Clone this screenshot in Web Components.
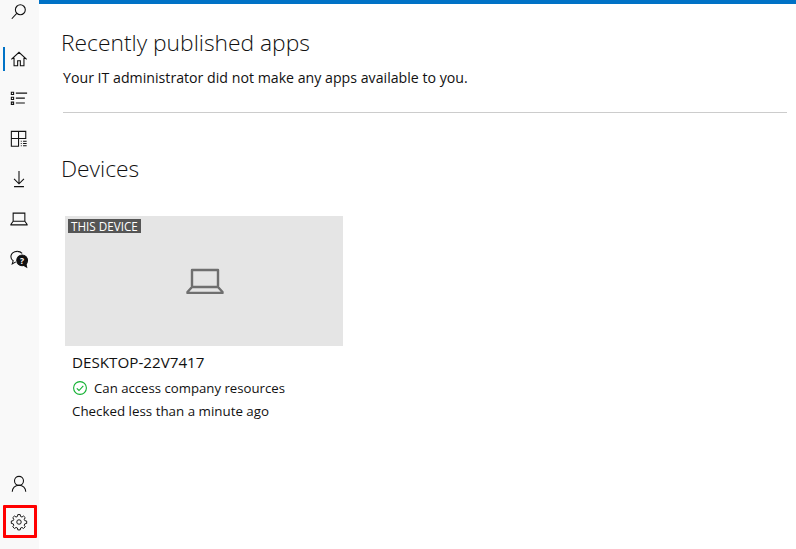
<!DOCTYPE html>
<html>
<head>
<meta charset="utf-8">
<style>
html,body{margin:0;height:100%;overflow:hidden;background:#fff}
body{font-family:"Open Sans","Noto Sans",sans-serif;color:#111}
</style>
</head>
<body>
<cp-shell>
  <cp-sidebar slot="side"></cp-sidebar>
  <cp-section title="Recently published apps" divider>Your IT administrator did not make any apps available to you.</cp-section>
  <cp-section title="Devices" class="devices">
    <cp-device name="DESKTOP-22V7417" status="Can access company resources" checked="Checked less than a minute ago"></cp-device>
  </cp-section>
</cp-shell>
<script>
class CpShell extends HTMLElement {
  constructor() {
    super();
    this.attachShadow({ mode: 'open' });
    this.shadowRoot.innerHTML = `
    <style>
    :host {display:flex;width:796px;height:549px;overflow:hidden}
    #main {flex:1;display:flex;flex-direction:column;border-top:4px solid #0072c6;padding:0 9px 0 22px;min-width:0}
    </style>
    <slot name="side"></slot>
    <div id="main"><slot></slot></div>
    `
  }
}
window.customElements.define('cp-shell', CpShell)

const icons = {
  search: '<circle cx="11.5" cy="7.5" r="5.500"/><path d="M7.500 11.500L2 17.500"/>',
  home: '<path d="M1.500 10.500L10 2.500l8.500 8M4.500 8.500V17.500h4v-5.500h3v5.500h4V8.500"/>',
  list: '<path d="M1.500 2.500h2.500v2.500H1.500zM1.500 8h2.500v2.500H1.500zM1.500 13.500h2.500V16H1.500zM6.500 3.500h12.500M6.500 9h10M6.500 14.500h10"/>',
  grid: '<path d="M1.500 1.500h16v8h-16zM9.500 1.500v8M1.500 9.500v8.500h8v-8.500M12 12.500h1M14.500 12.500h4M12 15h1M14.500 15h4M12 17.500h1M14.500 17.500h4"/>',
  down: '<path d="M10 1v14M4.500 9.800l5.500 5.500 5.500-5.500M4.500 18.500h11"/>',
  laptop: '<path d="M3.500 3.500h13v9h-13zM3.500 12.500l-2.500 3.500v.5h18v-.5l-2.500-3.500"/>',
  help: '<path d="M8 1.500C4 1.500 1 4.200 1 7.500c0 1.800 1 3.500 2.500 4.500L2.500 15.500l4-2.300"/><path d="M8 1.500c2.400 0 4.200.8 5.500 2.200"/><circle cx="13.500" cy="11.500" r="6" fill="#111"/><path d="M15 17l3.500 2-1-4.500" fill="#111"/><text x="13.500" y="15" font-size="9.500" font-weight="700" text-anchor="middle" fill="#fff" stroke="none" font-family="Open Sans">?</text>',
  person: '<circle cx="10" cy="6.500" r="5"/><path d="M2.500 18.500c0-4 3-7.200 7.500-7.200s7.500 3.200 7.500 7.200"/>',
  gear: '<circle cx="10" cy="10" r="2.800"/><path d="M8.500 .7h3l.5 2.400 1.700.7 2-1.300 2.100 2.100-1.300 2 .7 1.700 2.400.5v3l-2.400.5-.7 1.700 1.300 2-2.100 2.100-2-1.300-1.700.7-.5 2.400h-3l-.5-2.400-1.700-.7-2 1.300-2.100-2.100 1.300-2-.7-1.700-2.400-.5v-3l2.400-.5.7-1.700-1.300-2 2.100-2.100 2 1.300 1.700-.7z"/>'
}

class CpIcon extends HTMLElement {
  constructor() {
    super();
    this.attachShadow({ mode: 'open' });
    var name = this.getAttribute('name');
    this.shadowRoot.innerHTML = `
    <style>
    :host {display:flex;align-items:center;justify-content:center;width:38px;height:40px;position:relative}
    :host([active])::before {content:"";position:absolute;left:3px;top:8px;width:2px;height:24px;background:#0072c6}
    :host([short]) {height:24px}
    :host([boxed])::after {content:"";position:absolute;left:3px;top:3px;width:28px;height:27px;border:3px solid #f00;border-radius:1px}
    svg {width:18px;height:18px;overflow:visible;fill:none;stroke:#111;stroke-width:1.200}
    :host([name=gear]) svg {width:16px;height:16px}
    </style>
    <svg viewBox="0 0 20 20">${icons[name]}</svg>
    `
  }
}
window.customElements.define('cp-icon', CpIcon)

class CpSidebar extends HTMLElement {
  constructor() {
    super();
    this.attachShadow({ mode: 'open' });
    this.shadowRoot.innerHTML = `
    <style>
    :host {display:flex;flex-direction:column;width:39px;height:549px;background:#f9f9f9;flex:none}
    #top {margin-bottom:15px}
    #bottom {margin-top:auto;padding-bottom:7px;display:flex;flex-direction:column}
    cp-icon[name=person] {height:37px}
    cp-icon[name=gear] {height:40px}
    </style>
    <div id="top"><cp-icon name="search" short></cp-icon></div>
    <cp-icon name="home" active></cp-icon>
    <cp-icon name="list"></cp-icon>
    <cp-icon name="grid"></cp-icon>
    <cp-icon name="down"></cp-icon>
    <cp-icon name="laptop"></cp-icon>
    <cp-icon name="help"></cp-icon>
    <div id="bottom">
      <cp-icon name="person"></cp-icon>
      <cp-icon name="gear" boxed></cp-icon>
    </div>
    `
  }
}
window.customElements.define('cp-sidebar', CpSidebar)

class CpSection extends HTMLElement {
  constructor() {
    super();
    this.attachShadow({ mode: 'open' });
    this.shadowRoot.innerHTML = `
    <style>
    :host {display:block;font-size:14.18px}
    h2 {margin:0;font-weight:300;font-size:22.8px;line-height:32px;padding-top:23px}
    #body {padding:9px 0 0 2px;line-height:20px}
    hr {display:none;border:0;border-top:1px solid #ccc;margin:24px 0 0 2px}
    :host([divider]) hr {display:block}
    :host(.devices) h2 {padding-top:40px}
    :host(.devices) #body {padding:31px 0 0 4px}
    </style>
    <h2></h2>
    <div id="body"><slot></slot></div>
    <hr>
    `
    this.shadowRoot.querySelector('h2').textContent = this.getAttribute('title')
  }
}
window.customElements.define('cp-section', CpSection)

class CpDevice extends HTMLElement {
  constructor() {
    super();
    this.attachShadow({ mode: 'open' });
    this.shadowRoot.innerHTML = `
    <style>
    :host {display:block;width:278px;font-size:13.2px}
    #tile {height:130px;background:#e5e5e5;display:flex;align-items:center;justify-content:center;position:relative}
    #badge {position:absolute;left:3px;top:3px;background:#555;color:#fff;font-size:11.7px;line-height:14px;padding:0 3px}
    #tile svg {width:38px;height:26px;fill:none;stroke:#6f6f6f;stroke-width:2.400;stroke-linejoin:round;margin:0 0 1px 2px}
    #name {font-size:15.2px;line-height:20px;margin:6px 0 0 7px}
    #status {display:flex;align-items:center;gap:7px;line-height:20px;margin:6px 0 0 8px}
    #status svg {width:14px;height:14px;fill:none;stroke:#10b030;stroke-width:1.100}
    #checked {font-size:13.35px;line-height:20px;margin:3px 0 0 7px}
    </style>
    <div id="tile">
      <span id="badge">THIS DEVICE</span>
      <svg viewBox="0 0 38 26"><path d="M6 2h26v17H6zM6 19L1.500 24v1h35v-1L32 19"/></svg>
    </div>
    <div id="name"></div>
    <div id="status">
      <svg viewBox="0 0 14 14"><circle cx="7" cy="7" r="6.400"/><path d="M3.800 7.300l2.200 2.200 4.300-4.700"/></svg>
      <span id="st"></span>
    </div>
    <div id="checked"></div>
    `
    this.shadowRoot.getElementById('name').textContent = this.getAttribute('name')
    this.shadowRoot.getElementById('st').textContent = this.getAttribute('status')
    this.shadowRoot.getElementById('checked').textContent = this.getAttribute('checked')
  }
}
window.customElements.define('cp-device', CpDevice)
</script>
</body>
</html>
